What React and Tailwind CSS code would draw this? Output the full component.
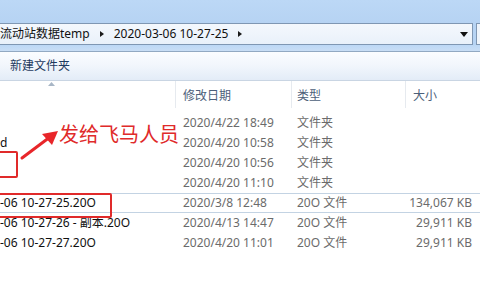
import React from "react";

const rows = [
  { name: "", date: "2020/4/22 18:49", type: "文件夹", size: "" },
  { name: "d", date: "2020/4/20 10:58", type: "文件夹", size: "" },
  { name: "", date: "2020/4/20 10:56", type: "文件夹", size: "" },
  { name: "", date: "2020/4/20 11:10", type: "文件夹", size: "" },
  { name: "-06 10-27-25.20O", date: "2020/3/8 12:48", type: "20O 文件", size: "134,067 KB", sel: true },
  { name: "-06 10-27-26 - 副本.20O", date: "2020/4/13 14:47", type: "20O 文件", size: "29,911 KB" },
  { name: "-06 10-27-27.20O", date: "2020/4/20 11:01", type: "20O 文件", size: "29,911 KB" },
];

function Chevron() {
  return (
    <svg width="6" height="8" viewBox="0 0 6 8" className="mx-[9px]">
      <path d="M1 1 L5 4 L1 7 Z" fill="#1a1a1a" />
    </svg>
  );
}

export default function App() {
  return (
    <div
      className="relative w-[480px] h-[300px] overflow-hidden bg-white text-[12px]"
      style={{ fontFamily: '"Noto Sans", "Noto Sans CJK SC", sans-serif' }}
    >
      {/* title band */}
      <div className="h-[23px] bg-gradient-to-b from-[#bcd8f6] to-[#b6d3f3]" />

      {/* address bar */}
      <div className="h-[22px] flex bg-[#b6d3f3]">
        <div className="flex-1 flex items-center border-y border-r border-[#7f97b3] bg-gradient-to-b from-[#f4f8fd] to-[#e9f1fa] text-[#111] text-[12px] leading-none">
          <span>流动站数据temp</span>
          <Chevron />
          <span>2020-03-06 10-27-25</span>
          <Chevron />
          <div className="flex-1" />
          <svg width="8" height="5" viewBox="0 0 8 5" className="mr-[4px]">
            <path d="M0 0 H8 L4 5 Z" fill="#111" />
          </svg>
        </div>
        <div className="w-[3px]" />
        <div className="w-[4px] border-y border-l border-[#7f97b3] bg-[#eef4fb]" />
      </div>

      {/* gap + dark line */}
      <div className="h-[7px] bg-gradient-to-b from-[#bcd8f6] to-[#c9def5] border-b border-[#92a9c2]" />

      {/* toolbar */}
      <div className="h-[29px] flex items-center px-[10px] bg-gradient-to-b from-[#fbfdff] via-[#f1f6fc] to-[#e3ecf7] border-b border-[#c9d5e3] text-[#1e3a5f] text-[12px]">
        新建文件夹
      </div>

      {/* column headers */}
      <div className="relative h-[27px] flex items-center text-[#4c607a]">
        <svg width="7" height="4" viewBox="0 0 7 4" className="absolute left-[48px] top-[1px]">
          <path d="M0 4 L3.5 0 L7 4 Z" fill="#a8b6c6" />
        </svg>
        <div className="w-[176px] h-full border-r border-[#e6eaef]" />
        <div className="w-[116px] h-full pl-[7px] pt-[2px] flex items-center border-r border-[#e6eaef]">修改日期</div>
        <div className="w-[114px] h-full pl-[5px] pt-[2px] flex items-center border-r border-[#e6eaef]">类型</div>
        <div className="flex-1 h-full pl-[7px] pt-[2px] flex items-center">大小</div>
      </div>

      {/* rows */}
      <div className="pt-[5px]">
        {rows.map((r, i) => (
          <div
            key={i}
            className={
              "h-[20px] flex items-center " +
              (r.sel ? "border-y border-[#c3d3e3]" : "")
            }
          >
            <div className="w-[176px] text-[#111] whitespace-nowrap">{r.name}</div>
            <div className="w-[116px] pl-[7px] text-[#6b6b6b] whitespace-nowrap">{r.date}</div>
            <div className="w-[114px] pl-[5px] text-[#6b6b6b] whitespace-nowrap">{r.type}</div>
            <div className="flex-1 pr-[8px] text-right text-[#6b6b6b] whitespace-nowrap">{r.size}</div>
          </div>
        ))}
      </div>

      {/* red annotations */}
      <div className="absolute left-[-12px] top-[151px] w-[30px] h-[27px] border-2 border-[#e02a2a] rounded-[2px]" />
      <div className="absolute left-[-4px] top-[193px] w-[116px] h-[25px] border-2 border-[#e02a2a] rounded-[2px]" />
      <svg className="absolute left-0 top-0" width="80" height="180" viewBox="0 0 80 180">
        <path d="M22 158 L50 137" stroke="#e8262a" strokeWidth="3" strokeLinecap="round" />
        <path d="M58 131 L42 134 L52 145 Z" fill="#e8262a" />
      </svg>
      <div
        className="absolute left-[59px] top-[121px] text-[20px] leading-[26px] text-[#e02a2a] whitespace-nowrap"
        style={{ fontFamily: '"Noto Sans CJK SC", sans-serif' }}
      >
        发给飞马人员
      </div>
    </div>
  );
}
